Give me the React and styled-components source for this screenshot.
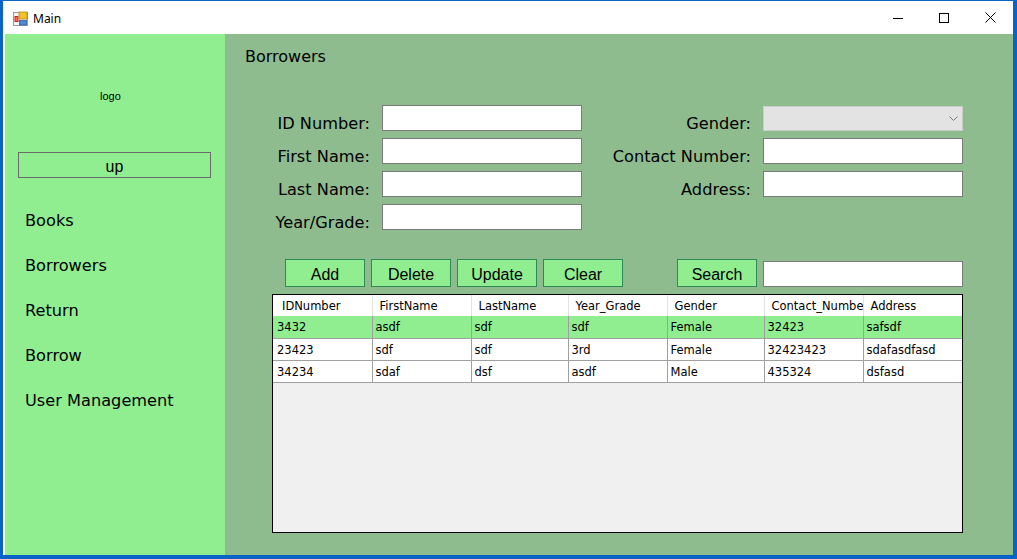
import React from "react";
import styled, { createGlobalStyle } from "styled-components";

const GlobalStyle = createGlobalStyle`
  html, body {
    margin: 0;
    padding: 0;
    background: #0a64c8;
  }
  * {
    box-sizing: border-box;
  }
`;

const columns = [
  { key: "id", title: "IDNumber", width: 99 },
  { key: "first", title: "FirstName", width: 99 },
  { key: "last", title: "LastName", width: 97 },
  { key: "year", title: "Year_Grade", width: 99 },
  { key: "gender", title: "Gender", width: 97 },
  { key: "contact", title: "Contact_Number", width: 99 },
  { key: "address", title: "Address", width: 99 },
];

const rows = [
  { id: "3432", first: "asdf", last: "sdf", year: "sdf", gender: "Female", contact: "32423", address: "safsdf" },
  { id: "23423", first: "sdf", last: "sdf", year: "3rd", gender: "Female", contact: "32423423", address: "sdafasdfasd" },
  { id: "34234", first: "sdaf", last: "dsf", year: "asdf", gender: "Male", contact: "435324", address: "dsfasd" },
];

const navItems = ["Books", "Borrowers", "Return", "Borrow", "User Management"];

const AppIcon = () => (
  <svg width="16" height="16" viewBox="0 0 16 16">
    <rect x="0.5" y="1.5" width="14" height="13" fill="#f4f4f4" stroke="#9a9a9a" />
    <rect x="1.5" y="5" width="4" height="6" fill="#c8261e" />
    <rect x="2.5" y="6" width="2" height="4" fill="#ff6a5a" />
    <rect x="6" y="1" width="8" height="7" fill="#f2c22a" stroke="#b88a10" strokeWidth="0.8" />
    <rect x="6.5" y="9.5" width="7" height="4.5" fill="#4e86d8" stroke="#2e5fa8" strokeWidth="0.8" />
  </svg>
);

const App = () => {
  return (
    <>
      <GlobalStyle />
      <Frame>
        <Window>
          <TitleBar>
            <TitleLeft>
              <AppIcon />
              <TitleText>Main</TitleText>
            </TitleLeft>
            <Controls>
              <ControlButton>
                <svg width="10" height="10" viewBox="0 0 10 10">
                  <line x1="0" y1="5.5" x2="10" y2="5.5" stroke="#000" strokeWidth="1" />
                </svg>
              </ControlButton>
              <ControlButton>
                <svg width="10" height="10" viewBox="0 0 10 10">
                  <rect x="0.5" y="0.5" width="9" height="9" fill="none" stroke="#000" strokeWidth="1" />
                </svg>
              </ControlButton>
              <ControlButton>
                <svg width="11" height="11" viewBox="0 0 11 11">
                  <path d="M0.5 0.5 L10.5 10.5 M10.5 0.5 L0.5 10.5" stroke="#000" strokeWidth="1" />
                </svg>
              </ControlButton>
            </Controls>
          </TitleBar>

          <Client>
            <Sidebar>
              <Logo>logo</Logo>
              <UpButton>up</UpButton>
              <Nav>
                {navItems.map((item) => (
                  <NavItem key={item}>{item}</NavItem>
                ))}
              </Nav>
            </Sidebar>

            <Main>
              <PageTitle>Borrowers</PageTitle>

              <Form>
                <Label>ID Number:</Label>
                <TextInput />
                <Label>Gender:</Label>
                <Combo>
                  <svg width="9" height="5" viewBox="0 0 9 5">
                    <path d="M0.5 0.5 L4.5 4.5 L8.5 0.5" fill="none" stroke="#7a7a7a" strokeWidth="1" />
                  </svg>
                </Combo>

                <Label>First Name:</Label>
                <TextInput />
                <Label>Contact Number:</Label>
                <TextInput />

                <Label>Last Name:</Label>
                <TextInput />
                <Label>Address:</Label>
                <TextInput />

                <Label>Year/Grade:</Label>
                <TextInput />
              </Form>

              <Actions>
                <ButtonGroup>
                  <ActionButton>Add</ActionButton>
                  <ActionButton>Delete</ActionButton>
                  <ActionButton>Update</ActionButton>
                  <ActionButton>Clear</ActionButton>
                </ButtonGroup>
                <SearchGroup>
                  <ActionButton>Search</ActionButton>
                  <TextInput />
                </SearchGroup>
              </Actions>

              <Grid>
                <Table>
                  <colgroup>
                    {columns.map((c) => (
                      <col key={c.key} style={{ width: c.width }} />
                    ))}
                  </colgroup>
                  <thead>
                    <tr>
                      {columns.map((c) => (
                        <HeadCell key={c.key}>{c.title}</HeadCell>
                      ))}
                    </tr>
                  </thead>
                  <tbody>
                    {rows.map((r, i) => (
                      <Row key={r.id} selected={i === 0}>
                        {columns.map((c) => (
                          <Cell key={c.key}>{r[c.key]}</Cell>
                        ))}
                      </Row>
                    ))}
                  </tbody>
                </Table>
              </Grid>
            </Main>
          </Client>
        </Window>
      </Frame>
    </>
  );
};

export default App;

const Frame = styled.div`
  width: 1017px;
  height: 559px;
  padding: 1px 4px 4px 3px;
  background: #0a64c8;
`;

const Window = styled.div`
  width: 100%;
  height: 100%;
  background: #ffffff;
  padding-left: 2px;
  display: flex;
  flex-direction: column;
`;

const TitleBar = styled.div`
  height: 33px;
  flex: none;
  display: flex;
  align-items: center;
  justify-content: space-between;
  background: #ffffff;
`;

const TitleLeft = styled.div`
  display: flex;
  align-items: center;
  gap: 4px;
  padding-left: 8px;
  padding-top: 2px;
`;

const TitleText = styled.span`
  font-family: "Noto Sans", "Open Sans", sans-serif;
  font-size: 12px;
  color: #000;
`;

const Controls = styled.div`
  display: flex;
  height: 100%;
`;

const ControlButton = styled.div`
  width: 46px;
  height: 100%;
  display: flex;
  align-items: center;
  justify-content: center;
`;

const Client = styled.div`
  flex: 1;
  display: flex;
  min-height: 0;
`;

const Sidebar = styled.div`
  width: 220px;
  flex: none;
  background: #90ee90;
  display: flex;
  flex-direction: column;
`;

const Logo = styled.div`
  font-family: "Liberation Sans", Arial, sans-serif;
  font-size: 11px;
  line-height: 13px;
  color: #000;
  margin: 56px 0 0 95px;
`;

const UpButton = styled.div`
  margin: 49px 0 0 13px;
  width: 193px;
  height: 26px;
  padding-top: 3px;
  border: 1px solid #6a6a6a;
  display: flex;
  align-items: center;
  justify-content: center;
  font-family: "Liberation Sans", Arial, sans-serif;
  font-size: 16px;
  color: #000;
`;

const Nav = styled.div`
  display: flex;
  flex-direction: column;
  gap: 25px;
  margin: 33px 0 0 20px;
`;

const NavItem = styled.div`
  font-family: "DejaVu Sans", Verdana, sans-serif;
  font-size: 16.2px;
  line-height: 20px;
  color: #000;
`;

const Main = styled.div`
  flex: 1;
  background: #8fbc8f;
  padding: 13px 0 0 20px;
  display: flex;
  flex-direction: column;
`;

const PageTitle = styled.div`
  font-family: "DejaVu Sans", Verdana, sans-serif;
  font-size: 16px;
  line-height: 20px;
  color: #000;
`;

const Form = styled.div`
  margin: 38px 0 0 8px;
  display: grid;
  grid-template-columns: 117px 200px 157px 200px;
  grid-auto-rows: 26px;
  column-gap: 12px;
  row-gap: 7px;
  align-items: center;
`;

const Label = styled.div`
  font-family: "DejaVu Sans", Verdana, sans-serif;
  font-size: 16.2px;
  line-height: 20px;
  color: #000;
  text-align: right;
  white-space: nowrap;
  padding-top: 12px;
`;

const TextInput = styled.div`
  height: 26px;
  background: #ffffff;
  border: 1px solid #7a7a7a;
`;

const Combo = styled.div`
  height: 25px;
  margin-top: 1px;
  background: #e3e3e3;
  border: 1px solid #cccccc;
  display: flex;
  align-items: center;
  justify-content: flex-end;
  padding-right: 4px;
`;

const Actions = styled.div`
  margin: 29px 0 0 40px;
  display: flex;
  align-items: center;
  gap: 54px;
`;

const ButtonGroup = styled.div`
  display: flex;
  gap: 6px;
`;

const SearchGroup = styled.div`
  display: flex;
  align-items: center;
  gap: 6px;
  & > div:last-child {
    width: 200px;
    margin-top: 2px;
  }
`;

const ActionButton = styled.div`
  width: 80px;
  height: 28px;
  padding-top: 3px;
  background: #90ee90;
  border: 1px solid #2e8b57;
  display: flex;
  align-items: center;
  justify-content: center;
  font-family: "Liberation Sans", Arial, sans-serif;
  font-size: 16px;
  color: #000;
`;

const Grid = styled.div`
  margin: 7px 0 0 27px;
  width: 691px;
  height: 239px;
  border: 1px solid #000;
  background: #f0f0f0;
  overflow: hidden;
`;

const Table = styled.table`
  border-collapse: collapse;
  table-layout: fixed;
  width: 689px;
  font-family: "DejaVu Sans", Verdana, sans-serif;
  font-size: 11.5px;
  color: #000;
`;

const HeadCell = styled.th`
  height: 21px;
  padding: 1px 0 0 7px;
  background: #ffffff;
  border-right: 1px solid #e3e3e3;
  font-weight: normal;
  text-align: left;
  white-space: nowrap;
  overflow: hidden;
  text-overflow: clip;
  &:first-child {
    padding-left: 9px;
  }
`;

const Row = styled.tr`
  background: ${({ selected }) => (selected ? "#90ee90" : "#ffffff")};
`;

const Cell = styled.td`
  height: 22px;
  padding: 1px 0 0 3px;
  border-right: 1px solid #a0a0a0;
  border-bottom: 1px solid #a0a0a0;
  white-space: nowrap;
  overflow: hidden;
  &:first-child {
    padding-left: 4px;
  }
`;
